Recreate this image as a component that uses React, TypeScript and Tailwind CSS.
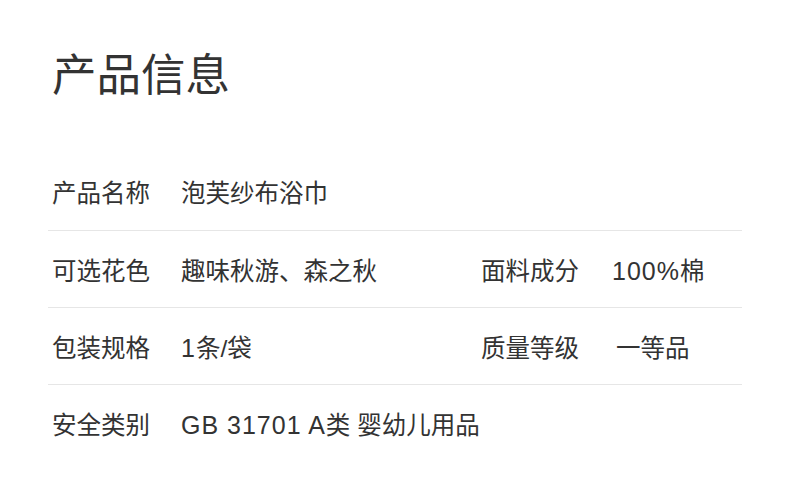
import type { ReactNode } from "react";

const font = { fontFamily: '"Liberation Sans", "Noto Sans CJK SC", sans-serif' };

// latin text in the reference is a bit wider than Arial
function Latin({ children }: { children: ReactNode }) {
  return <span className="text-[25px] tracking-[1px]">{children}</span>;
}

type Row = { label: string; value: ReactNode; label2?: string; value2?: ReactNode };

const rows: Row[] = [
  { label: "产品名称", value: "泡芙纱布浴巾" },
  {
    label: "可选花色",
    value: "趣味秋游、森之秋",
    label2: "面料成分",
    value2: (
      <>
        <Latin>100%</Latin>棉
      </>
    ),
  },
  {
    label: "包装规格",
    value: (
      <>
        <Latin>1</Latin>条/袋
      </>
    ),
    label2: "质量等级",
    value2: <span className="pl-[4px]">一等品</span>,
  },
  {
    label: "安全类别",
    value: (
      <>
        <Latin>GB 31701 A</Latin>类 婴幼儿用品
      </>
    ),
  },
];

export default function App() {
  return (
    <div className="h-[493px] w-[790px] overflow-hidden bg-white px-[48px] text-[#333333]" style={font}>
      <h1 className="pl-[4px] pt-[54px] text-[44.5px] font-normal leading-[44px]">产品信息</h1>
      <div className="mt-[56px]">
        {rows.map((r, i) => (
          <div
            key={r.label}
            className={`grid h-[77px] grid-cols-[129px_300px_131px_1fr] items-baseline pl-[4px] pt-[28px] text-[24.5px] leading-[24px] ${
              i < rows.length - 1 ? "border-b border-[#e6e6e6]" : ""
            }`}
          >
            <span>{r.label}</span>
            <span className={r.label2 ? "" : "col-span-3 whitespace-nowrap"}>{r.value}</span>
            {r.label2 && <span>{r.label2}</span>}
            {r.value2 && <span>{r.value2}</span>}
          </div>
        ))}
      </div>
    </div>
  );
}
